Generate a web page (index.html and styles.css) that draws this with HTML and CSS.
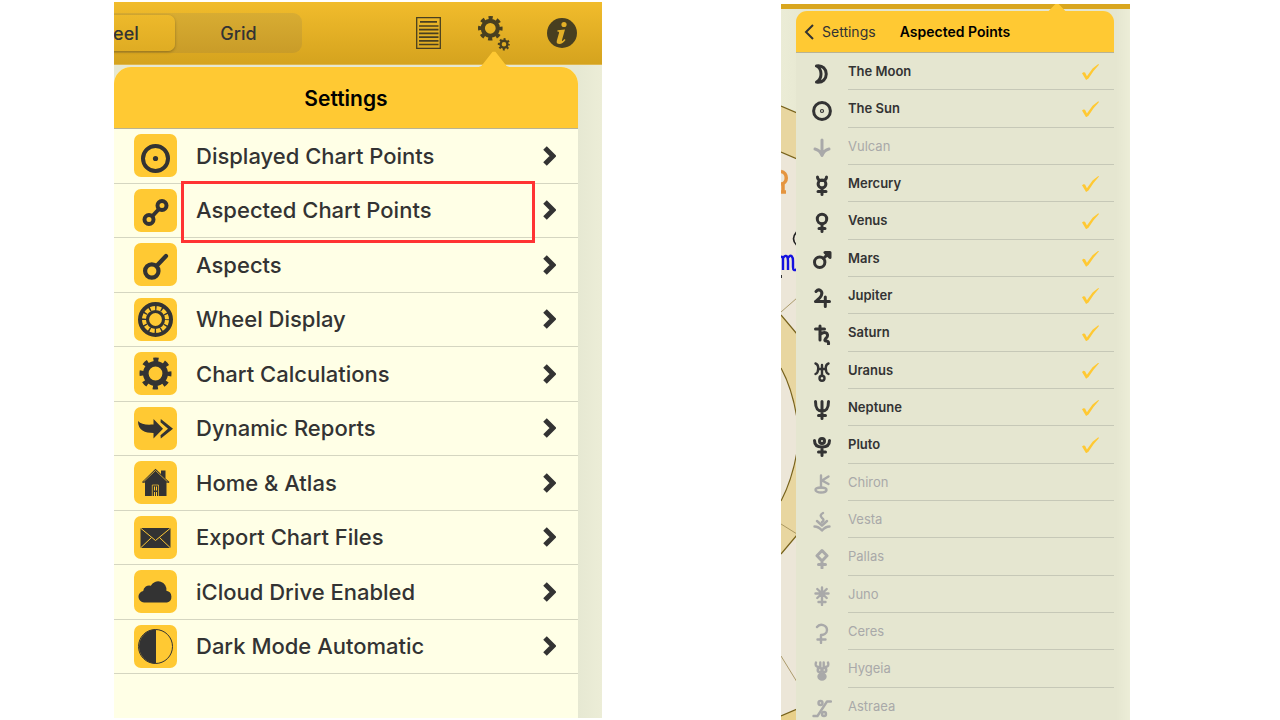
FILE: index.html
```html
<!DOCTYPE html>
<html lang="en">
<head>
    <meta charset="UTF-8">
    <meta name="viewport" content="width=device-width, initial-scale=1.0">
    <title>Settings</title>
    <link rel="stylesheet" href="styles.css">
</head>
<body>

    <main class="screens">

        <section class="screen">
            <header class="toolbar">
                <div class="segmented">
                    <button class="segment active">Wheel</button>
                    <button class="segment">Grid</button>
                </div>
                <nav class="tools">
                    <button class="tool" aria-label="Report">
                        <svg width="25" height="32" viewBox="0 0 25 32"><path d="M.7.7h23.6v30.6H.7z" fill="none" stroke="currentColor" stroke-width="1.3"/><path d="M4 4.800h17M3 9h19.500M3 12.700h19.500M3 16.400h19.500M3 20.100h19.500M3 23.800h19.500M3 27.500h19.500" stroke="currentColor" stroke-width="1.7"/></svg>
                    </button>
                    <button class="tool" aria-label="Settings">
                        <svg width="32" height="35" viewBox="0 0 32 35" fill="none" stroke="currentColor">
                            <circle cx="12.300" cy="12.300" r="7.500" stroke-width="4.200"/>
                            <circle cx="12.300" cy="12.300" r="10.500" stroke-width="3.600" stroke-dasharray="4.200 4.047" stroke-dashoffset="2.100"/>
                            <circle cx="26" cy="28.300" r="3.500" stroke-width="2.400"/>
                            <circle cx="26" cy="28.300" r="5" stroke-width="2.400" stroke-dasharray="1.900 2.027" stroke-dashoffset="0.950"/>
                        </svg>
                    </button>
                    <button class="tool" aria-label="Info">
                        <svg width="30" height="30" viewBox="0 0 30 30"><circle cx="15" cy="15" r="15" fill="currentColor"/><circle cx="17" cy="6.500" r="2.600" fill="#e3b027"/><path d="M10.500 12.300l7.500-.8-3 10.500q-.4 1.500.8.800l1.700-1.700 1 .8q-3 4-6 4-3.500 0-2.700-3.200l2.300-8q.2-1.200-1.800-1.200z" fill="#e3b027"/></svg>
                    </button>
                </nav>
            </header>

            <div class="popover">
                <h1 class="popover-title">Settings</h1>
                <ul class="menu">
                    <li><a href="#">
                        <svg class="tile" viewBox="0 0 43 43"><circle cx="21.500" cy="24.500" r="12.500" fill="none" stroke="currentColor" stroke-width="4"/><circle cx="21.500" cy="24.500" r="2.600" fill="currentColor"/></svg>
                        <span>Displayed Chart Points</span>
                        <svg class="chevron" viewBox="0 0 13 20"><path d="M2 2l8 8-8 8"/></svg>
                    </a></li>
                    <li class="highlighted"><a href="#">
                        <svg class="tile" viewBox="0 0 43 43" fill="none" stroke="currentColor" stroke-width="4"><circle cx="28" cy="16.500" r="4.500"/><circle cx="15" cy="30.500" r="4.500"/><path d="M25 20l-7 7.500"/></svg>
                        <span>Aspected Chart Points</span>
                        <svg class="chevron" viewBox="0 0 13 20"><path d="M2 2l8 8-8 8"/></svg>
                    </a></li>
                    <li><a href="#">
                        <svg class="tile" viewBox="0 0 43 43" fill="none" stroke="currentColor" stroke-width="4.200" stroke-linecap="round"><circle cx="17.800" cy="28" r="6.700"/><path d="M23 22.500L32 13"/></svg>
                        <span>Aspects</span>
                        <svg class="chevron" viewBox="0 0 13 20"><path d="M2 2l8 8-8 8"/></svg>
                    </a></li>
                    <li><a href="#">
                        <svg class="tile" viewBox="0 0 43 43" fill="none" stroke="currentColor"><circle cx="21.500" cy="21.500" r="15.500" stroke-width="4"/><circle cx="21.500" cy="21.500" r="8" stroke-width="3.200"/><circle cx="21.500" cy="21.500" r="12" stroke-width="5" stroke-dasharray="1.500 4.783" stroke-dashoffset="0.750"/></svg>
                        <span>Wheel Display</span>
                        <svg class="chevron" viewBox="0 0 13 20"><path d="M2 2l8 8-8 8"/></svg>
                    </a></li>
                    <li><a href="#">
                        <svg class="tile" viewBox="0 0 43 43" fill="none" stroke="currentColor"><circle cx="21.500" cy="21.500" r="9.700" stroke-width="5.600"/><circle cx="21.500" cy="21.500" r="13.500" stroke-width="5" stroke-dasharray="5 5.603" stroke-dashoffset="2.500"/></svg>
                        <span>Chart Calculations</span>
                        <svg class="chevron" viewBox="0 0 13 20"><path d="M2 2l8 8-8 8"/></svg>
                    </a></li>
                    <li><a href="#">
                        <svg class="tile" viewBox="0 0 43 43"><path d="M4 14c3 3.500 8 4 15.500 3.500V12L29 21.800 19.500 31.500V26C11 26 4 23.500 4 14z" fill="currentColor"/><path d="M26.800 12L39 21.800 26.800 31.500l-.3-3.200 7.500-6.500-7.500-6.500z" fill="currentColor"/></svg>
                        <span>Dynamic Reports</span>
                        <svg class="chevron" viewBox="0 0 13 20"><path d="M2 2l8 8-8 8"/></svg>
                    </a></li>
                    <li><a href="#">
                        <svg class="tile" viewBox="0 0 43 43"><path d="M21.500 7.800L27 13V9.500h4.500v8L35.500 21l-1 1-2-.5V35H11V21.500l-2 .5-1-1z" fill="currentColor"/><path d="M9.500 20.800l12-11.300 12 11.300M18.300 35V24h6.200v11" fill="none" stroke="#ffc933" stroke-width=".7"/><path d="M20 25.500h1v4h-1zM22 25.500h1v4h-1zM20 31h1v4h-1zM22 31h1v4h-1z" fill="#ffc933"/></svg>
                        <span>Home &amp; Atlas</span>
                        <svg class="chevron" viewBox="0 0 13 20"><path d="M2 2l8 8-8 8"/></svg>
                    </a></li>
                    <li><a href="#">
                        <svg class="tile" viewBox="0 0 43 43"><rect x="6.500" y="12" width="30" height="20" rx="1" fill="currentColor"/><path d="M7 12.500l14.500 12L36 12.500M7 31.500l10.500-10M36 31.500l-10.500-10" fill="none" stroke="#ffc933"/></svg>
                        <span>Export Chart Files</span>
                        <svg class="chevron" viewBox="0 0 13 20"><path d="M2 2l8 8-8 8"/></svg>
                    </a></li>
                    <li><a href="#">
                        <svg class="tile" viewBox="0 0 43 43"><path d="M10 32.500a5.800 5.800 0 0 1-.8-11.500 6 6 0 0 1 7.600-5.200 8.300 8.300 0 0 1 15.600 5 6 6 0 0 1 .6 11.700z" fill="currentColor"/></svg>
                        <span>iCloud Drive Enabled</span>
                        <svg class="chevron" viewBox="0 0 13 20"><path d="M2 2l8 8-8 8"/></svg>
                    </a></li>
                    <li><a href="#">
                        <svg class="tile" viewBox="0 0 43 43"><circle cx="21.500" cy="21.500" r="17" fill="none" stroke="currentColor"/><path d="M22 4.500v34a17 17 0 0 1 0-34z" fill="currentColor"/></svg>
                        <span>Dark Mode Automatic</span>
                        <svg class="chevron" viewBox="0 0 13 20"><path d="M2 2l8 8-8 8"/></svg>
                    </a></li>
                </ul>
            </div>
        </section>

        <section class="screen screen-points">
            <!-- edge of the chart wheel showing behind the list -->
            <svg class="wheel-edge" width="16" height="716" viewBox="0 4 16 716" fill="none">
                <path d="M0 152l16 7v561H0z" fill="#ece6d8"/>
                <path d="M0 106l16 7v46l-16-7zM0 315l16 19v202L0 554z" fill="#e8d6a0"/>
                <path d="M0 368q11 20 16 50v34q-5 28-16 49z" fill="#ece6d8"/>
                <path d="M0 716l16-7v11H0z" fill="#e8d08a"/>
                <path d="M0 106l16 7M0 152l16 7M0 315l16 19M0 368q11 20 16 50M16 452q-5 28-16 49M16 535L0 554M0 716l16-7" stroke="#77621c" stroke-width="1.200"/>
                <path d="M0 312l16-14M0 524l16 10M0 656l16 26" stroke="#9a8850" stroke-width=".8"/>
                <path d="M0 171.500c7 1 7 12 0 12.500M2 184v8M0 192h5" stroke="#e5953f" stroke-width="3.500"/>
                <path d="M15.500 232q-6 7 0 13" stroke="#222" stroke-width="1.600"/>
                <path d="M0 256l2 2v12M2 258c4-5 5 0 5 3v9M7 258c3-5 5-1 5 3v6q0 5 4 2" stroke="#1411df" stroke-width="2.400"/>
                <path d="M0 275v3" stroke="#333" stroke-width="2"/>
            </svg>

            <div class="popover popover-small">
                <header class="popover-bar">
                    <a class="back" href="#">
                        <svg width="10" height="16" viewBox="0 0 10 16" fill="none" stroke="currentColor" stroke-width="2"><path d="M9 1L2 8l7 7"/></svg>
                        Settings
                    </a>
                    <h2>Aspected Points</h2>
                </header>
                <ul class="points">
                    <li><label>
                        <svg class="glyph" viewBox="0 0 20 24"><path d="M4.500 6c13-2 13 18 0 16 6-3 6-13 0-16z"/></svg>
                        <span>The Moon</span><input type="checkbox" checked>
                    </label></li>
                    <li><label>
                        <svg class="glyph" viewBox="0 0 20 24"><circle cx="10" cy="14" r="8.400"/><circle cx="10" cy="14" r=".6"/></svg>
                        <span>The Sun</span><input type="checkbox" checked>
                    </label></li>
                    <li><label>
                        <svg class="glyph" viewBox="0 0 20 24"><path d="M10 6v15M3 15q5 1 7 6.500Q12 16 17 15"/></svg>
                        <span>Vulcan</span><input type="checkbox">
                    </label></li>
                    <li><label>
                        <svg class="glyph" viewBox="0 0 20 24"><circle cx="10" cy="12" r="3.900"/><path d="M5.500 5q0 3.500 4.500 3.500T14.500 5M10 16v6.500M6 19.500h8"/></svg>
                        <span>Mercury</span><input type="checkbox" checked>
                    </label></li>
                    <li><label>
                        <svg class="glyph" viewBox="0 0 20 24"><circle cx="10" cy="10" r="4.700"/><path d="M10 15v7.500M7 19.500h6"/></svg>
                        <span>Venus</span><input type="checkbox" checked>
                    </label></li>
                    <li><label>
                        <svg class="glyph" viewBox="0 0 20 24"><circle cx="7.700" cy="16.300" r="5.200"/><path d="M11.500 12.500l5-5M13 6.500h5v5z"/></svg>
                        <span>Mars</span><input type="checkbox" checked>
                    </label></li>
                    <li><label>
                        <svg class="glyph" viewBox="0 0 20 24"><path d="M4 7.500c3-3.500 7-.5 5.500 3.500-1 3-4 5-6 6.500h14M13.300 13v9.500"/></svg>
                        <span>Jupiter</span><input type="checkbox" checked>
                    </label></li>
                    <li><label>
                        <svg class="glyph" viewBox="0 0 20 24"><path d="M8 5v14M3.500 8h9M8 13.500c5-4 9-1 7 2.500-2 2-3 4-1 4q3 0 2.500 3"/></svg>
                        <span>Saturn</span><input type="checkbox" checked>
                    </label></li>
                    <li><label>
                        <svg class="glyph thin" viewBox="0 0 20 24"><path d="M10 7v11M6 11h8M3.500 5.500q3 1 2.700 5.500Q6 15 3.500 16M16.500 5.500q-3 1-2.700 5.500.2 4 2.700 5"/><circle cx="10" cy="20.300" r="2.500"/></svg>
                        <span>Uranus</span><input type="checkbox" checked>
                    </label></li>
                    <li><label>
                        <svg class="glyph" viewBox="0 0 20 24"><path d="M10 5.500v17M3.500 5.500C3.500 13 6 15 10 15s6.500-2 6.500-9.500M6.500 19.500h7"/></svg>
                        <span>Neptune</span><input type="checkbox" checked>
                    </label></li>
                    <li><label>
                        <svg class="glyph" viewBox="0 0 20 24"><circle cx="10" cy="8" r="2.500"/><path d="M2.500 7.500C2.500 12 5.500 14 10 14s7.500-2 7.500-6.500M10 14v8.500M6.500 19h7"/></svg>
                        <span>Pluto</span><input type="checkbox" checked>
                    </label></li>
                    <li><label>
                        <svg class="glyph thin" viewBox="0 0 20 24"><path d="M9 5.500v12M16.500 6.500L10 10.500l6.500 3.500"/><ellipse cx="9" cy="20" rx="5.500" ry="2.500"/></svg>
                        <span>Chiron</span><input type="checkbox">
                    </label></li>
                    <li><label>
                        <svg class="glyph thin" viewBox="0 0 20 24"><path d="M11 5q-4 2-1 5 3 2 0 4M5 13l5 4.500 5-4.500M2.500 18.500q4 0 7.500 4 3.500-4 7.500-4"/></svg>
                        <span>Vesta</span><input type="checkbox">
                    </label></li>
                    <li><label>
                        <svg class="glyph" viewBox="0 0 20 24"><path d="M10 5.500l5 5.300-5 5.200-5-5.200zM10 16v7M6.500 19.500h7"/></svg>
                        <span>Pallas</span><input type="checkbox">
                    </label></li>
                    <li><label>
                        <svg class="glyph thin" viewBox="0 0 20 24"><path d="M10 5.500v17.500M6.500 20h7M3.500 11.500h13M5.300 7l9.400 9M14.700 7l-9.400 9"/></svg>
                        <span>Juno</span><input type="checkbox">
                    </label></li>
                    <li><label>
                        <svg class="glyph thin" viewBox="0 0 20 24"><path d="M5 7c3-4 10-2 10 3 0 4-4 5-6 5v8M5.500 19.500h8"/></svg>
                        <span>Ceres</span><input type="checkbox">
                    </label></li>
                    <li><label>
                        <svg class="glyph thin" viewBox="0 0 20 24"><path d="M4 5.500q-1.500 4 2.500 4.500M16 5.500q1.500 4-2.500 4.500M8.300 5.500v5M11.700 5.500v5"/><circle cx="7.700" cy="13" r="2"/><circle cx="12.300" cy="13" r="2"/><ellipse cx="10" cy="19.500" rx="3.500" ry="3" fill="currentColor"/></svg>
                        <span>Hygeia</span><input type="checkbox">
                    </label></li>
                    <li><label>
                        <svg class="glyph thin" viewBox="0 0 20 24"><path d="M1.500 22h4L15 7.500h4"/><circle cx="8.500" cy="9" r="2"/><circle cx="12" cy="20" r="2"/></svg>
                        <span>Astraea</span><input type="checkbox">
                    </label></li>
                </ul>
            </div>
        </section>

    </main>

</body>
</html>
```
FILE: styles.css
```css
* {
    box-sizing: border-box;
}
body {
    margin: 0;
    background-color: #fff;
    color: #333;
    font-family: Inter, Roboto, sans-serif;
}
h1, h2, ul {
    margin: 0;
    padding: 0;
}
ul {
    list-style: none;
}
a {
    color: inherit;
    text-decoration: none;
}
button {
    padding: 0;
    border: none;
    background: none;
    color: inherit;
    font: inherit;
    cursor: pointer;
}
svg {
    display: block;
    flex: none;
}

.screens {
    display: grid;
    grid-template-columns: 488fr 349fr;
    gap: 179px;
    height: 100vh;
    padding: 2px 150px 0 114px;
    overflow: hidden;
}
.screen {
    display: flex;
    flex-direction: column;
    margin-bottom: 2px;
    background: linear-gradient(to right, #e6e8d2 95%, #ecedd7);
    overflow: hidden;
}

/* toolbar */
.toolbar {
    display: flex;
    align-items: center;
    justify-content: space-between;
    height: 63px;
    padding-right: 25px;
    background: linear-gradient(#f1bc2c, #d5a31e);
    border-bottom: 1px solid #dfb64b;
}
.segmented {
    display: grid;
    grid-template-columns: 1fr 1fr;
    width: 256px;
    height: 40px;
    margin-left: -68px;
    padding: 2px 0 2px 2px;
    border-radius: 9px;
    background: linear-gradient(#d8ac32, #c99c28);
}
.segment {
    border-radius: 7px;
    font-size: 18px;
    font-weight: 500;
}
.segment.active {
    background: linear-gradient(#edb92b, #dfac23);
    box-shadow: 0 1px 3px rgba(0, 0, 0, 0.3);
}
.tools {
    display: flex;
    align-items: center;
    gap: 37px;
    color: #483f20;
}

/* popover */
.popover {
    position: relative;
    flex: 1;
    margin: 2px 24px 0 0;
    border-radius: 17px 17px 0 0;
    background-color: #ffffe6;
}
.popover::before {
    content: "";
    position: absolute;
    top: -16px;
    right: 66px;
    width: 36px;
    height: 17px;
    background-color: #ffc933;
    clip-path: polygon(0 100%, 15% 88%, 46% 4%, 54% 4%, 85% 88%, 100% 100%);
}
.popover-title {
    padding: 17px 0 15px;
    border-bottom: 1px solid #b9b394;
    border-radius: 17px 17px 0 0;
    background-color: #ffc933;
    color: #000;
    font-size: 21px;
    font-weight: 600;
    line-height: 29px;
    text-align: center;
}
.menu {
    display: grid;
    grid-auto-rows: 1fr;
    min-height: 545px;
}
.menu li {
    position: relative;
    border-bottom: 1px solid #d5d6c1;
}
.menu a {
    display: flex;
    align-items: center;
    gap: 19px;
    height: 100%;
    padding: 0 22px 0 20px;
    font-size: 22px;
    font-weight: 500;
}
.menu span {
    flex: 1;
}
.tile {
    width: 43px;
    height: 43px;
    border-radius: 7px;
    background-color: #ffc933;
}
.chevron {
    width: 13px;
    height: 20px;
    fill: none;
    stroke: #333;
    stroke-width: 5;
}
.highlighted::after {
    content: "";
    position: absolute;
    top: -3px;
    right: 43px;
    bottom: -6px;
    left: 67px;
    border: 3px solid #ff3333;
    z-index: 1;
    pointer-events: none;
}

/* aspected points */
.screen-points {
    position: relative;
    margin: 2px 0 0;
    padding-top: 5px;
    background: linear-gradient(#d9a61f, #d9a61f) top / 100% 5px no-repeat,
        linear-gradient(to right, #ebecd6, #e5e6d0 10%, #e5e6d0 96%, #ecedd7);
}
.wheel-edge {
    position: absolute;
    top: 0;
    left: 0;
}
.popover-small {
    margin: 2px 16px 0 15px;
    border-radius: 11px 11px 0 0;
    background-color: #e5e6d0;
}
.popover-small::before {
    top: -8px;
    right: 45px;
    width: 24px;
    height: 9px;
}
.popover-bar {
    display: grid;
    grid-template-columns: 1fr auto 1fr;
    align-items: center;
    height: 42px;
    padding: 0 8px;
    border-bottom: 1px solid #b9b394;
    border-radius: 11px 11px 0 0;
    background-color: #ffc933;
    font-size: 14px;
}
.popover-bar h2 {
    color: #000;
    font-size: 14px;
    font-weight: 600;
}
.back {
    display: flex;
    align-items: center;
    gap: 8px;
}
.points {
    display: grid;
    grid-auto-rows: 1fr;
    min-height: 672px;
}
.points label {
    display: flex;
    align-items: center;
    height: 100%;
    padding-left: 16px;
    color: #a9a9a9;
    font-size: 13px;
}
.points label:has(input:checked) {
    color: #333;
    font-weight: 600;
}
.points span {
    flex: 1;
    align-self: stretch;
    display: flex;
    align-items: center;
    margin-left: 16px;
    border-bottom: 1px solid #c6c8b7;
}
.glyph {
    width: 20px;
    height: 24px;
    fill: none;
    stroke: currentColor;
    stroke-width: 3;
    stroke-linecap: round;
    stroke-linejoin: round;
}
.glyph.thin {
    stroke-width: 2.4;
}
.points input {
    appearance: none;
    align-self: stretch;
    width: 32px;
    margin: 0;
    border-bottom: 1px solid #c6c8b7;
}
.points input::before {
    content: "";
    display: block;
    width: 17px;
    height: 16px;
    margin-top: 11px;
}
.points input:checked::before {
    background-color: #ffc933;
    clip-path: polygon(0 58%, 8% 51%, 18% 53%, 29% 76%, 62% 28%, 96% 0, 100% 4%, 68% 44%, 38% 90%, 24% 100%);
}
```
